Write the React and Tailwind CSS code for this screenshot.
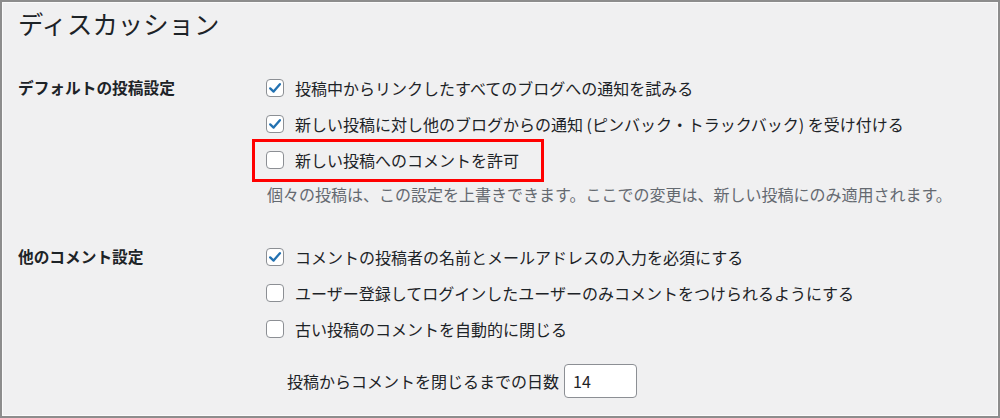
const FONT = { fontFamily: '"Noto Sans CJK JP", "Noto Sans", sans-serif' };

function Box({ checked }) {
  return (
    <span className="w-[18px] h-[18px] shrink-0 rounded-[4px] border border-[#8c8f94] bg-white flex items-center justify-center">
      {checked && (
        <svg width="16" height="16" viewBox="0 0 16 16" fill="none">
          <path d="M3.2 8.4 6.6 11.6 12.9 4.2" stroke="#2271b1" strokeWidth="2.3" strokeLinecap="round" strokeLinejoin="round" />
        </svg>
      )}
    </span>
  );
}

function Row({ checked, children, marked }) {
  return (
    <div className="relative h-[36px] flex items-center">
      {marked && <div className="absolute -left-[14px] -top-[3px] -bottom-[4px] w-[292px] border-[3px] border-[#f00]" />}
      <Box checked={checked} />
      <span className="ml-[11px] whitespace-nowrap">{children}</span>
    </div>
  );
}

export default function App() {
  return (
    <div style={FONT} className="w-[1000px] h-[418px] bg-[#f0f0f1] border-2 border-[#8d8d8d] text-[#1d2327] text-[16px] overflow-hidden">
      <div className="h-full border border-[#fbfbfb] box-border">
        <div className="h-[67px] pt-[3px] pl-[15px]">
          <h1 className="text-[25.4px] leading-[34px] font-normal">ディスカッション</h1>
        </div>

        <div className="flex">
          <div className="w-[263px] shrink-0 pl-[15px] leading-[36px] font-bold text-[15.7px]">デフォルトの投稿設定</div>
          <div className="flex flex-col">
            <Row checked>投稿中からリンクしたすべてのブログへの通知を試みる</Row>
            <Row checked>新しい投稿に対し他のブログからの通知 (ピンバック・トラックバック) を受け付ける</Row>
            <Row marked>新しい投稿へのコメントを許可</Row>
            <p className="h-[32px] leading-[32px] text-[#646970] ml-[1px] whitespace-nowrap">個々の投稿は、この設定を上書きできます。ここでの変更は、新しい投稿にのみ適用されます。</p>
          </div>
        </div>

        <div className="flex mt-[29px]">
          <div className="w-[263px] shrink-0 pl-[15px] leading-[36px] font-bold text-[15.7px]">他のコメント設定</div>
          <div className="flex flex-col">
            <Row checked>コメントの投稿者の名前とメールアドレスの入力を必須にする</Row>
            <Row>ユーザー登録してログインしたユーザーのみコメントをつけられるようにする</Row>
            <Row>古い投稿のコメントを自動的に閉じる</Row>
            <div className="mt-[17px] ml-[21px] flex items-center gap-[5px]">
              <span className="whitespace-nowrap">投稿からコメントを閉じるまでの日数</span>
              <div className="w-[73px] h-[34px] bg-white border border-[#8c8f94] rounded-[4px] flex items-center pl-[8px]">14</div>
            </div>
          </div>
        </div>
      </div>
    </div>
  );
}
